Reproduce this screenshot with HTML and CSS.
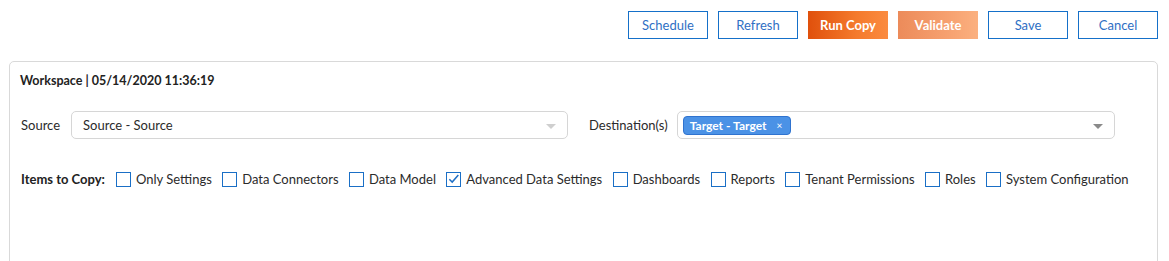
FILE: index.html
```html
<!DOCTYPE html>
<html>
<head>
<meta charset="utf-8">
<link rel="stylesheet" href="styles.css">
</head>
<body>
<div class="toolbar">
  <button class="btn btn-outline">Schedule</button>
  <button class="btn btn-outline">Refresh</button>
  <button class="btn btn-primary">Run Copy</button>
  <button class="btn btn-primary btn-disabled">Validate</button>
  <button class="btn btn-outline">Save</button>
  <button class="btn btn-outline">Cancel</button>
</div>
<div class="panel">
  <div class="panel-title">Workspace | 05/14/2020 11:36:19</div>
  <div class="fields">
    <div class="field">
      <span class="field-label">Source</span>
      <div class="select select-source">
        <span class="select-value">Source - Source</span>
        <span class="caret"></span>
      </div>
    </div>
    <div class="field field-grow">
      <span class="field-label">Destination(s)</span>
      <div class="select select-dest">
        <span class="chip">Target - Target <span class="chip-x">×</span></span>
        <span class="caret caret-dark"></span>
      </div>
    </div>
  </div>
  <div class="items">
    <span class="items-label">Items to Copy:</span>
    <label class="check"><span class="box"></span>Only Settings</label>
    <label class="check"><span class="box"></span>Data Connectors</label>
    <label class="check"><span class="box"></span>Data Model</label>
    <label class="check"><span class="box checked"><svg width="14" height="14" viewBox="0 0 14 14"><path d="M2.5 7.2 L5.6 10.3 L12.2 2.6" fill="none" stroke="#1f6fc5" stroke-width="1.6"/></svg></span>Advanced Data Settings</label>
    <label class="check"><span class="box"></span>Dashboards</label>
    <label class="check"><span class="box"></span>Reports</label>
    <label class="check"><span class="box"></span>Tenant Permissions</label>
    <label class="check"><span class="box"></span>Roles</label>
    <label class="check"><span class="box"></span>System Configuration</label>
  </div>
</div>
</body>
</html>
```

FILE: styles.css
```css
* { box-sizing: border-box; }
html, body { margin: 0; padding: 0; background: #fff; }
body {
  font-family: Lato, "Liberation Sans", Arial, sans-serif;
  font-size: 13px;
  color: #2b2b2b;
  overflow: hidden;
}
.toolbar {
  display: flex;
  justify-content: flex-end;
  gap: 10px;
  padding: 11px 11px 0 0;
  height: 39px;
}
.btn {
  width: 80px;
  height: 28px;
  font-family: Lato, "Liberation Sans", Arial, sans-serif;
  font-size: 13px;
  padding: 0;
  cursor: pointer;
}
.btn-outline {
  background: #fff;
  border: 1px solid #1570c9;
  color: #2f6fc4;
}
.btn-primary {
  border: none;
  color: #fff;
  font-weight: 700;
  background: linear-gradient(90deg, #e0500c 0%, #f47a2c 60%, #fb8b40 100%);
}
.btn-disabled {
  background: linear-gradient(90deg, #ec8b5a 0%, #f6a06f 60%, #fbb07f 100%);
}
.panel {
  margin: 22px 11px 0 9px;
  border: 1px solid #d9d9d9;
  border-radius: 5px;
  min-height: 260px;
  padding: 11px 0 0 10px;
}
.panel-title {
  font-weight: 700;
  font-size: 12.5px;
  color: #222;
  line-height: 15px;
}
.fields {
  display: flex;
  align-items: center;
  margin-top: 23px;
  padding-right: 42px;
}
.field {
  display: flex;
  align-items: center;
}
.field-grow { flex: 1; margin-left: 21px; }
.field-label {
  margin-left: 1px;
  margin-right: 11px;
  color: #2b2b2b;
}
.field-grow .field-label { margin-left: 0; margin-right: 9px; }
.select {
  height: 28px;
  border: 1px solid #d6d6d6;
  border-radius: 5px;
  display: flex;
  align-items: center;
  position: relative;
}
.select-source { width: 497px; padding-left: 11px; }
.select-dest { flex: 1; padding-left: 5px; }
.select-value { color: #2b2b2b; }
.caret {
  position: absolute;
  right: 11px;
  top: 12px;
  width: 0;
  height: 0;
  border-left: 5px solid transparent;
  border-right: 5px solid transparent;
  border-top: 5px solid #cfcfcf;
}
.caret-dark { border-top-color: #8a8a8a; right: 11px; }
.chip {
  display: inline-flex;
  align-items: center;
  height: 19px;
  padding: 0 8px 0 6px;
  background: #4b92e6;
  border: 1px solid #2f73cf;
  border-radius: 4px;
  color: #fff;
  font-weight: 700;
  font-size: 12px;
}
.chip-x { margin-left: 10px; font-size: 10px; font-weight: 400; }
.items {
  display: flex;
  align-items: center;
  margin-top: 32px;
  padding-left: 1px;
}
.items-label {
  font-weight: 700;
  font-size: 13px;
  color: #222;
  margin-right: 11px;
}
.check {
  display: flex;
  align-items: center;
  margin-right: 10.4px;
  color: #2b2b2b;
}
.box {
  width: 15px;
  height: 15px;
  border: 1px solid #1a6fc6;
  margin-right: 5px;
  display: inline-flex;
  align-items: center;
  justify-content: center;
  background: #fff;
}
.box svg { display: block; }
```
